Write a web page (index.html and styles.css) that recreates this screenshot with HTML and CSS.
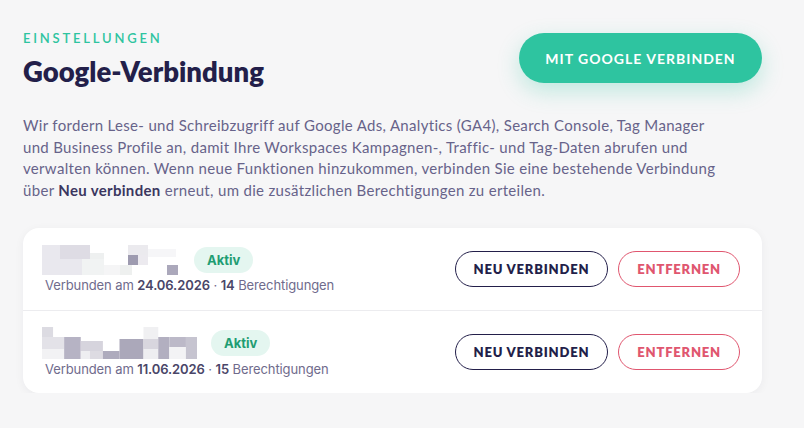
FILE: index.html
```html
<!DOCTYPE html>
<html lang="de">
<head>
    <meta charset="utf-8">
    <link rel="stylesheet" href="styles.css">
</head>
<body>
    <div class="page">
        <div class="head">
            <div>
                <div class="eyebrow">EINSTELLUNGEN</div>
                <h1 class="title">Google-Verbindung</h1>
            </div>
            <button class="btn-connect">MIT GOOGLE VERBINDEN</button>
        </div>

        <p class="intro">Wir fordern Lese- und Schreibzugriff auf Google Ads, Analytics (GA4), Search Console, Tag Manager<br>
            und Business Profile an, damit Ihre Workspaces Kampagnen-, Traffic- und Tag-Daten abrufen und<br>
            verwalten können. Wenn neue Funktionen hinzukommen, verbinden Sie eine bestehende Verbindung<br>
            über <b>Neu verbinden</b> erneut, um die zusätzlichen Berechtigungen zu erteilen.</p>

        <div class="card">
            <div class="row">
                <div class="info">
                    <div class="name-line">
                        <!-- redacted account name -->
                        <svg class="blur" width="138" height="30" viewBox="0 0 138 30">
                            <rect x="0" y="0" width="48" height="30" fill="#e9e8ee"/>
                            <rect x="18" y="0" width="30" height="14" fill="#dedce4"/>
                            <rect x="48" y="8" width="14" height="14" fill="#eef0f0"/>
                            <rect x="40" y="14" width="22" height="16" fill="#f1f3f3"/>
                            <rect x="62" y="20" width="16" height="10" fill="#f5f5f6"/>
                            <rect x="78" y="20" width="12" height="10" fill="#eef0ef"/>
                            <rect x="86" y="0" width="20" height="10" fill="#ebeaee"/>
                            <rect x="86" y="10" width="10" height="10" fill="#9e9bb0"/>
                            <rect x="96" y="10" width="10" height="10" fill="#eceaef"/>
                            <rect x="106" y="4" width="28" height="8" fill="#f6f6f8"/>
                            <rect x="125" y="20" width="11" height="10" fill="#aba8bb"/>
                        </svg>
                        <span class="badge">Aktiv</span>
                    </div>
                    <div class="meta">Verbunden am <b>24.06.2026</b> · <b>14</b> Berechtigungen</div>
                </div>
                <div class="actions">
                    <button class="btn-outline">NEU VERBINDEN</button>
                    <button class="btn-outline danger">ENTFERNEN</button>
                </div>
            </div>
            <div class="row">
                <div class="info">
                    <div class="name-line">
                        <svg class="blur wide" width="155" height="32" viewBox="0 0 168 32" preserveAspectRatio="none">
                            <rect x="0" y="0" width="12" height="22" fill="#dcdbe2"/>
                            <rect x="0" y="10" width="24" height="12" fill="#e3e2e8"/>
                            <rect x="0" y="22" width="24" height="10" fill="#f2f2f4"/>
                            <rect x="24" y="10" width="18" height="22" fill="#b6b3c4"/>
                            <rect x="42" y="14" width="24" height="10" fill="#d6d4dd"/>
                            <rect x="42" y="24" width="10" height="8" fill="#eeeef1"/>
                            <rect x="52" y="24" width="14" height="8" fill="#dddbe2"/>
                            <rect x="66" y="24" width="18" height="8" fill="#aeabbd"/>
                            <rect x="84" y="12" width="26" height="20" fill="#aba8ba"/>
                            <rect x="110" y="0" width="16" height="12" fill="#f0f0f2"/>
                            <rect x="110" y="12" width="16" height="10" fill="#d8d6de"/>
                            <rect x="110" y="22" width="16" height="10" fill="#eeeef1"/>
                            <rect x="126" y="10" width="12" height="22" fill="#b2afc0"/>
                            <rect x="138" y="10" width="18" height="10" fill="#bcb9c8"/>
                            <rect x="138" y="20" width="18" height="12" fill="#f3f3f5"/>
                            <rect x="156" y="10" width="12" height="22" fill="#c6c4d0"/>
                        </svg>
                        <span class="badge">Aktiv</span>
                    </div>
                    <div class="meta">Verbunden am <b>11.06.2026</b> · <b>15</b> Berechtigungen</div>
                </div>
                <div class="actions">
                    <button class="btn-outline">NEU VERBINDEN</button>
                    <button class="btn-outline danger">ENTFERNEN</button>
                </div>
            </div>
        </div>
    </div>
</body>
</html>
```

FILE: styles.css
```css
body {
    margin: 0;
    background-color: #f6f6f7;
    font-family: "Lato", "Liberation Sans", sans-serif;
    color: #231f4a;
}

.page {
    width: 739px;
    padding: 32px 42px 0 23px;
}

.head {
    display: flex;
    justify-content: space-between;
    align-items: flex-start;
}

.eyebrow {
    font-size: 13px;
    font-weight: 600;
    letter-spacing: 2.8px;
    color: #2ec4a0;
    line-height: 13px;
}

.title {
    margin: 10px 0 0 0;
    font-size: 27.5px;
    font-weight: 800;
    line-height: 34px;
    color: #231f4a;
}

.btn-connect {
    margin-top: 1px;
    width: 243px;
    height: 50px;
    border: none;
    border-radius: 25px;
    background-color: #2ec4a0;
    color: white;
    font-family: "Lato", sans-serif;
    font-size: 14px;
    font-weight: 700;
    letter-spacing: 1px;
    box-shadow: 0 8px 22px rgba(46, 196, 160, 0.28);
}

.intro {
    margin: 26px -30px 0 0;
    font-size: 15px;
    letter-spacing: 0.32px;
    line-height: 21.5px;
    color: #67638a;
    white-space: nowrap;
}

.intro b {
    color: #3b3660;
}

.card {
    margin-top: 27px;
    background-color: white;
    border-radius: 16px;
    box-shadow: 0 2px 10px rgba(30, 30, 60, 0.05);
}

.row {
    display: flex;
    justify-content: space-between;
    align-items: center;
    height: 82px;
    padding: 0 22px 0 19px;
}

.row + .row {
    border-top: 1px solid #ececef;
}

.name-line {
    display: flex;
    align-items: center;
    gap: 14px;
}

.badge {
    background-color: #e4f6f0;
    color: #1f9d73;
    font-family: "Inter", sans-serif;
    font-size: 13px;
    font-weight: 700;
    padding: 5px 13px;
    border-radius: 13px;
}

.meta {
    margin-top: 2px;
    padding-left: 3px;
    font-family: "Inter", sans-serif;
    font-size: 13px;
    letter-spacing: -0.1px;
    color: #6f6b8c;
}

.meta b {
    font-weight: 600;
    color: #4a4668;
}

.actions {
    display: flex;
    gap: 10px;
}

.btn-outline {
    height: 36px;
    padding: 0 18px;
    border: 1.5px solid #231f4a;
    border-radius: 18px;
    background-color: white;
    color: #231f4a;
    font-family: "Lato", sans-serif;
    font-size: 13px;
    font-weight: 800;
    letter-spacing: 0.8px;
}

.btn-outline.danger {
    border-color: #e0566f;
    color: #e0566f;
}
```
